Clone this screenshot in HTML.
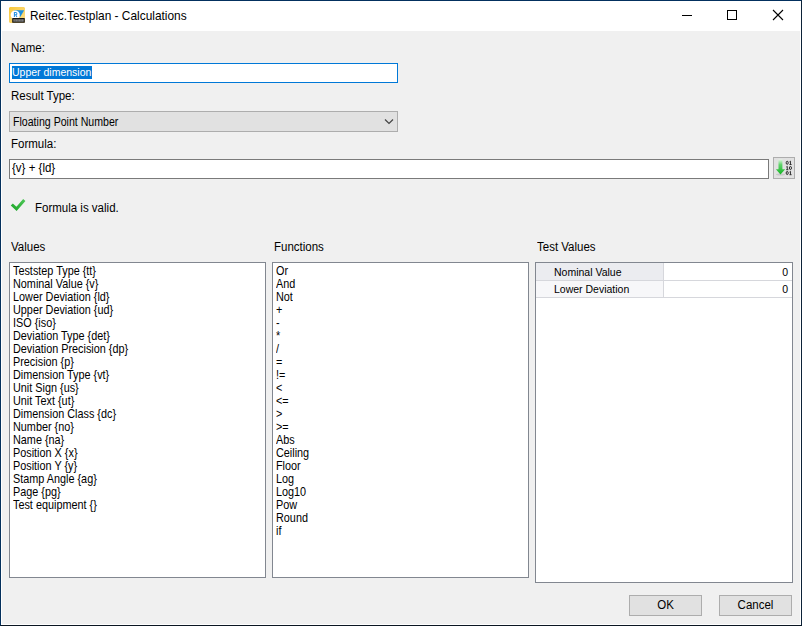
<!DOCTYPE html>
<html><head><meta charset="utf-8">
<style>
html,body{margin:0;padding:0;}
body{width:802px;height:626px;position:relative;overflow:hidden;background:#f0f0f0;font-family:"Liberation Sans",sans-serif;font-size:11px;color:#000;}
.a{position:absolute;}
.t{position:absolute;white-space:pre;line-height:13px;height:13px;transform:scaleY(1.12);transform-origin:0 10px;}
.tn{position:absolute;white-space:pre;line-height:13px;height:13px;}
.box{position:absolute;box-sizing:border-box;}
</style></head><body>
<!-- frame -->
<div class="box" style="left:0;top:0;width:802px;height:626px;border:1px solid #0c2a4a;border-top-color:#03305e;border-left-color:#04305c;border-right-color:#0c2238;border-bottom-color:#0a1521;background:#fff;"></div>
<div class="a" style="left:2px;top:31px;width:798px;height:593px;background:#f0f0f0;"></div>
<svg class="a" style="left:9px;top:7px" width="16" height="16" viewBox="0 0 16 16">
<defs><linearGradient id="yg" x1="0" y1="0" x2="1" y2="1"><stop offset="0" stop-color="#f7c73a"/><stop offset="1" stop-color="#fde08e"/></linearGradient></defs>
<path d="M1 0 H15 L16 1 V15 L15 16 H1 L0 15 V1 Z" fill="url(#yg)"/>
<path d="M5 3.2 H15.2 L11.2 10 Z" fill="#1b8ee0"/>
<circle cx="6.2" cy="8.1" r="4.6" fill="#fff"/>
<path d="M5.4 10 V5.5 H6.7 Q7.9 5.5 7.9 6.65 Q7.9 7.8 6.7 7.8 H5.4 M6.7 7.8 L7.9 10" stroke="#2a93e2" stroke-width="1.05" fill="none" stroke-linecap="butt" stroke-linejoin="miter"/>
<rect x="3.2" y="11" width="12.6" height="4.8" rx="0.6" fill="#151515"/>
<rect x="4.3" y="12.2" width="10.4" height="2.5" fill="#7d7d7d"/><path d="M6.2 12.2 v2.5 M9 12.2 v2.5 M12 12.2 v2.5" stroke="#3a3a3a" stroke-width="0.5"/>
</svg>
<div class="tn" style="left:30px;top:9px;font-size:11.9px;line-height:14px;height:14px;">Reitec.Testplan - Calculations</div>
<div class="a" style="left:682px;top:15px;width:10px;height:1px;background:#000;"></div>
<div class="box" style="left:727px;top:10px;width:10px;height:10px;border:1px solid #000;"></div>
<svg class="a" style="left:772px;top:9px" width="12" height="12" viewBox="0 0 12 12"><path d="M1 1 L11 11 M11 1 L1 11" stroke="#000" stroke-width="1.1"/></svg>
<div class="t" style="left:11px;top:42px;font-size:11.5px;">Name:</div>
<div class="box" style="left:9px;top:63px;width:389px;height:20px;border:1px solid #0078d7;background:#fff;"></div>
<div class="a" style="left:12px;top:66px;width:80px;height:13px;background:#0078d7;"></div>
<div class="tn" style="left:12px;top:66px;font-size:10.5px;color:#fff;">Upper dimension</div>
<div class="t" style="left:11px;top:90px;font-size:11.5px;">Result Type:</div>
<div class="box" style="left:9px;top:111px;width:389px;height:21px;border:1px solid #adadad;background:#e1e1e1;"></div>
<div class="t" style="left:13px;top:116px;font-size:10.6px;">Floating Point Number</div>
<svg class="a" style="left:384px;top:118px" width="10" height="7" viewBox="0 0 10 7"><path d="M1 1.5 L5 5.5 L9 1.5" stroke="#444" stroke-width="1.2" fill="none"/></svg>
<div class="t" style="left:11px;top:138px;font-size:11.5px;">Formula:</div>
<div class="box" style="left:9px;top:159px;width:760px;height:20px;border:1px solid #7a7a7a;background:#fff;"></div>
<div class="t" style="left:12px;top:162px;font-size:11.5px;">{v} + {ld}</div>
<div class="box" style="left:773px;top:157px;width:22px;height:22px;border:1px solid #adadad;background:#e1e1e1;"></div>
<svg class="a" style="left:774px;top:158px" width="20" height="20" viewBox="0 0 20 20">
<defs><linearGradient id="ag" x1="0" y1="0" x2="0" y2="1"><stop offset="0" stop-color="#e1f5e1"/><stop offset="0.35" stop-color="#5fd36a"/><stop offset="1" stop-color="#14b424"/></linearGradient></defs>
<ellipse cx="6.5" cy="16.6" rx="4.5" ry="1" fill="#c8c8c8"/>
<path d="M4.5 1.5 H8.4 V11.2 H11.2 L6.5 16.4 L1.9 11.2 H4.5 Z" fill="url(#ag)"/>
<g><ellipse cx="13.20" cy="4.80" rx="1.05" ry="1.55" fill="none" stroke="#111" stroke-width="0.85"/><path d="M15.50 3.80 L16.50 3.20 V6.40 M15.40 6.50 H17.60" fill="none" stroke="#111" stroke-width="0.8"/><path d="M12.30 9.00 L13.30 8.40 V11.60 M12.20 11.70 H14.40" fill="none" stroke="#111" stroke-width="0.8"/><ellipse cx="16.40" cy="10.00" rx="1.05" ry="1.55" fill="none" stroke="#111" stroke-width="0.85"/><ellipse cx="13.20" cy="15.00" rx="1.05" ry="1.55" fill="none" stroke="#111" stroke-width="0.85"/><path d="M15.50 14.00 L16.50 13.40 V16.60 M15.40 16.70 H17.60" fill="none" stroke="#111" stroke-width="0.8"/></g></svg>
<svg class="a" style="left:10px;top:198px" width="16" height="15" viewBox="0 0 16 15"><defs><linearGradient id="cg" x1="0" y1="1" x2="1" y2="0"><stop offset="0" stop-color="#1ea82a"/><stop offset="1" stop-color="#4cc556"/></linearGradient></defs><path d="M1.8 6.5 L6.5 10.9 L14.3 1.9" stroke="url(#cg)" stroke-width="3" fill="none" stroke-linecap="butt"/></svg>
<div class="t" style="left:35px;top:202px;font-size:11.5px;">Formula is valid.</div>
<div class="t" style="left:11px;top:241px;font-size:11.5px;">Values</div>
<div class="t" style="left:274px;top:241px;font-size:11.5px;">Functions</div>
<div class="t" style="left:537px;top:241px;font-size:11.5px;">Test Values</div>
<div class="box" style="left:9px;top:262px;width:257px;height:316px;border:1px solid #828790;background:#fff;"></div>
<div class="box" style="left:272px;top:262px;width:257px;height:316px;border:1px solid #828790;background:#fff;"></div>
<div class="box" style="left:535px;top:262px;width:258px;height:321px;border:1px solid #828790;background:#fff;"></div>
<div class="t" style="left:13px;top:265px;font-size:10.85px;">Teststep Type {tt}</div>
<div class="t" style="left:13px;top:278px;font-size:10.85px;">Nominal Value {v}</div>
<div class="t" style="left:13px;top:291px;font-size:10.85px;">Lower Deviation {ld}</div>
<div class="t" style="left:13px;top:304px;font-size:10.85px;">Upper Deviation {ud}</div>
<div class="t" style="left:13px;top:317px;font-size:10.85px;">ISO {iso}</div>
<div class="t" style="left:13px;top:330px;font-size:10.85px;">Deviation Type {det}</div>
<div class="t" style="left:13px;top:343px;font-size:10.85px;">Deviation Precision {dp}</div>
<div class="t" style="left:13px;top:356px;font-size:10.85px;">Precision {p}</div>
<div class="t" style="left:13px;top:369px;font-size:10.85px;">Dimension Type {vt}</div>
<div class="t" style="left:13px;top:382px;font-size:10.85px;">Unit Sign {us}</div>
<div class="t" style="left:13px;top:395px;font-size:10.85px;">Unit Text {ut}</div>
<div class="t" style="left:13px;top:408px;font-size:10.85px;">Dimension Class {dc}</div>
<div class="t" style="left:13px;top:421px;font-size:10.85px;">Number {no}</div>
<div class="t" style="left:13px;top:434px;font-size:10.85px;">Name {na}</div>
<div class="t" style="left:13px;top:447px;font-size:10.85px;">Position X {x}</div>
<div class="t" style="left:13px;top:460px;font-size:10.85px;">Position Y {y}</div>
<div class="t" style="left:13px;top:473px;font-size:10.85px;">Stamp Angle {ag}</div>
<div class="t" style="left:13px;top:486px;font-size:10.85px;">Page {pg}</div>
<div class="t" style="left:13px;top:499px;font-size:10.85px;">Test equipment {}</div>
<div class="t" style="left:276px;top:265px;font-size:10.85px;">Or</div>
<div class="t" style="left:276px;top:278px;font-size:10.85px;">And</div>
<div class="t" style="left:276px;top:291px;font-size:10.85px;">Not</div>
<div class="t" style="left:276px;top:304px;font-size:10.85px;">+</div>
<div class="t" style="left:276px;top:317px;font-size:10.85px;">-</div>
<div class="t" style="left:276px;top:330px;font-size:10.85px;">*</div>
<div class="t" style="left:276px;top:343px;font-size:10.85px;">/</div>
<div class="t" style="left:276px;top:356px;font-size:10.85px;">=</div>
<div class="t" style="left:276px;top:369px;font-size:10.85px;">!=</div>
<div class="t" style="left:276px;top:382px;font-size:10.85px;">&lt;</div>
<div class="t" style="left:276px;top:395px;font-size:10.85px;">&lt;=</div>
<div class="t" style="left:276px;top:408px;font-size:10.85px;">&gt;</div>
<div class="t" style="left:276px;top:421px;font-size:10.85px;">&gt;=</div>
<div class="t" style="left:276px;top:434px;font-size:10.85px;">Abs</div>
<div class="t" style="left:276px;top:447px;font-size:10.85px;">Ceiling</div>
<div class="t" style="left:276px;top:460px;font-size:10.85px;">Floor</div>
<div class="t" style="left:276px;top:473px;font-size:10.85px;">Log</div>
<div class="t" style="left:276px;top:486px;font-size:10.85px;">Log10</div>
<div class="t" style="left:276px;top:499px;font-size:10.85px;">Pow</div>
<div class="t" style="left:276px;top:512px;font-size:10.85px;">Round</div>
<div class="t" style="left:276px;top:525px;font-size:10.85px;">if</div>
<div class="a" style="left:536px;top:263px;width:127px;height:17px;background:#ebecf0;"></div>
<div class="a" style="left:536px;top:281px;width:127px;height:16px;background:#f7f7f9;"></div>
<div class="a" style="left:536px;top:280px;width:256px;height:1px;background:#d6d7dc;"></div>
<div class="a" style="left:536px;top:297px;width:256px;height:1px;background:#d6d7dc;"></div>
<div class="a" style="left:663px;top:263px;width:1px;height:34px;background:#d6d7dc;"></div>
<div class="tn" style="left:554px;top:266px;font-size:10.5px;">Nominal Value</div>
<div class="tn" style="left:554px;top:283px;font-size:10.5px;">Lower Deviation</div>
<div class="tn" style="left:700px;top:266px;font-size:10.5px;width:88px;text-align:right;">0</div>
<div class="tn" style="left:700px;top:283px;font-size:10.5px;width:88px;text-align:right;">0</div>
<div class="box" style="left:629px;top:595px;width:73px;height:21px;border:1px solid #adadad;background:#e1e1e1;"></div>
<div class="t" style="left:629px;top:599px;font-size:11.5px;width:73px;text-align:center;">OK</div>
<div class="box" style="left:719px;top:595px;width:73px;height:21px;border:1px solid #adadad;background:#e1e1e1;"></div>
<div class="t" style="left:719px;top:599px;font-size:11.5px;width:73px;text-align:center;">Cancel</div>
</body></html>
